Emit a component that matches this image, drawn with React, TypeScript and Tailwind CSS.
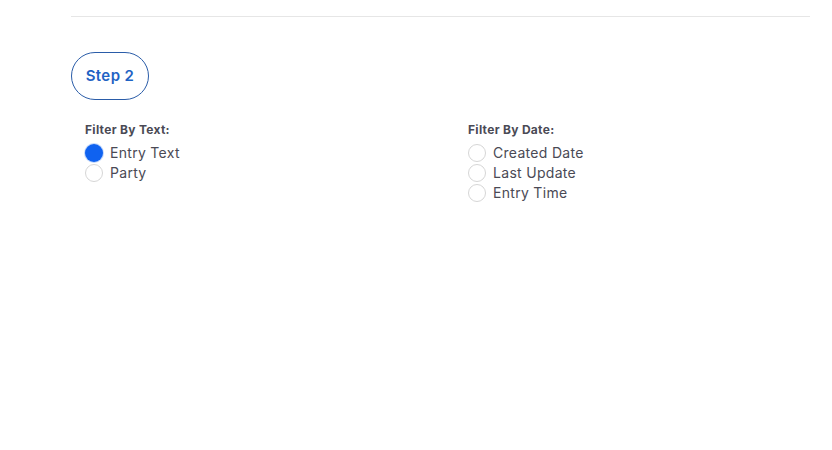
import React from "react";

function Radio({ label, checked = false }: { label: string; checked?: boolean }) {
  return (
    <label className="flex h-5 items-center gap-[7px]">
      <span
        className={
          checked
            ? "h-[18px] w-[18px] rounded-full bg-[#0f62f0] shadow-[0_0_0_1px_rgba(15,98,240,0.25)]"
            : "h-[18px] w-[18px] rounded-full border border-[#d6d6d6] bg-white"
        }
      />
      <span className="text-[14px] leading-5 tracking-[0.3px] text-[#4a4a55]">{label}</span>
    </label>
  );
}

export default function App() {
  return (
    <div className="min-h-[450px] w-[832px] bg-white font-['Inter','Open_Sans',sans-serif]">
      <div className="pl-[71px] pr-[22px] pt-4">
        <div className="h-px bg-[#e6e6e6]" />
      </div>

      <div className="mt-[35px] pl-[71px]">
        <div className="flex h-[48px] w-[78px] items-center justify-center rounded-full border border-[#2a5ca8]">
          <span className="text-[15px] font-semibold tracking-[0.4px] text-[#1f63c4]">Step 2</span>
        </div>
      </div>

      <div className="mt-[21px] grid grid-cols-[383px_1fr] pl-[85px]">
        <div>
          <p className="mb-[4px] text-[12px] font-bold tracking-[0.3px] text-[#4a4a55]">Filter By Text:</p>
          <Radio label="Entry Text" checked />
          <Radio label="Party" />
        </div>
        <div>
          <p className="mb-[4px] text-[12px] font-bold tracking-[0.3px] text-[#4a4a55]">Filter By Date:</p>
          <Radio label="Created Date" />
          <Radio label="Last Update" />
          <Radio label="Entry Time" />
        </div>
      </div>
    </div>
  );
}
